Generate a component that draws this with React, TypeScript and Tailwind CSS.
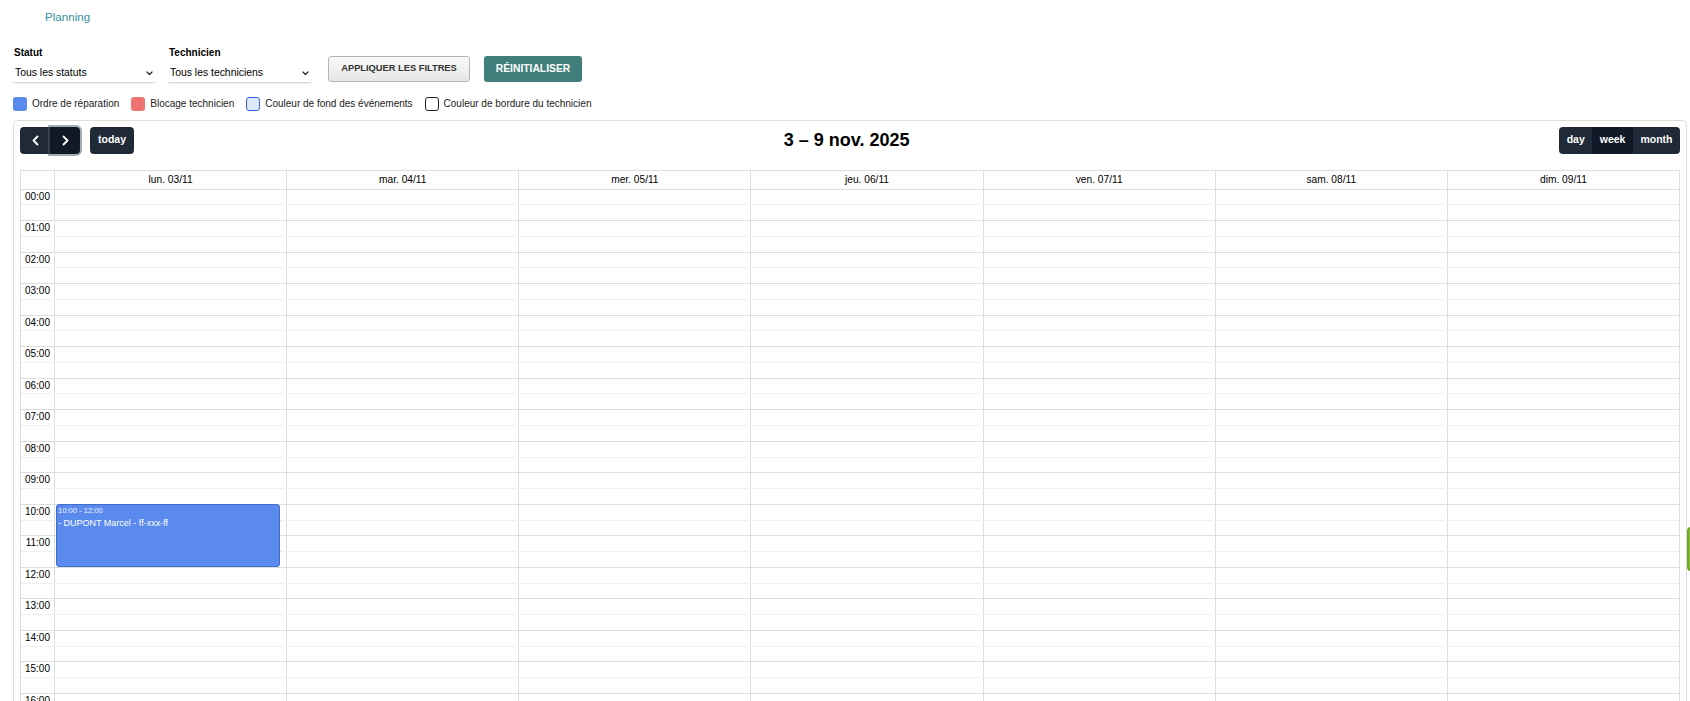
import * as React from 'react'

const DAYS = ['lun. 03/11', 'mar. 04/11', 'mer. 05/11', 'jeu. 06/11', 'ven. 07/11', 'sam. 08/11', 'dim. 09/11']
const HOURS = Array.from({ length: 24 }, (_, i) => i)

const LEGEND = [
  { label: 'Ordre de réparation', swatch: 'bg-[#5b8aee]' },
  { label: 'Blocage technicien', swatch: 'bg-[#f07474]' },
  { label: 'Couleur de fond des événements', swatch: 'bg-[#dbe7fd] border border-[#3565d4]' },
  { label: 'Couleur de bordure du technicien', swatch: 'bg-white border border-[#222]' },
]

function pad(n: number) {
  return String(n).padStart(2, '0')
}

function Chevron({ dir }: { dir: 'left' | 'right' | 'down' }) {
  if (dir === 'down') {
    return (
      <svg width="7" height="5" viewBox="0 0 7 5" fill="none">
        <path d="M1 1l2.5 2.5L6 1" stroke="#222" strokeWidth="1.2" strokeLinecap="round" strokeLinejoin="round" />
      </svg>
    )
  }
  return (
    <svg width="7" height="11" viewBox="0 0 7 11" fill="none">
      <path
        d={dir === 'left' ? 'M5.5 1.5 1.5 5.5l4 4' : 'M1.5 1.5l4 4-4 4'}
        stroke="white"
        strokeWidth="1.8"
        strokeLinecap="round"
        strokeLinejoin="round"
      />
    </svg>
  )
}

function FilterSelect({ label, value, width, className = '' }: { label: string; value: string; width: string; className?: string }) {
  return (
    <div className={`flex flex-col ${width} ${className}`}>
      <label className="h-[12px] pl-[2px] text-[10px] font-bold leading-[12px] text-black">{label}</label>
      <div
        role="combobox"
        className="relative mt-[4px] flex h-[20px] items-center rounded-[3px] border-b border-[#d6d6d6] pl-[3px] pr-[14px] pt-[1px] shadow-[0_1px_1px_rgba(0,0,0,0.05)]"
      >
        <span className="text-[10.4px] leading-[14px] text-black">{value}</span>
        <span className="pointer-events-none absolute right-[3px] top-[8px]">
          <Chevron dir="down" />
        </span>
      </div>
    </div>
  )
}

function Toolbar() {
  return (
    <div className="mb-[16px] flex h-[27px] items-center justify-between">
      <div className="flex items-center">
        <div className="flex">
          <button className="flex h-[27px] w-[30px] items-center justify-center rounded-l-[4px] bg-[#1f2937]">
            <Chevron dir="left" />
          </button>
          <button className="relative z-10 flex h-[27px] w-[30px] items-center justify-center rounded-r-[4px] bg-[#111827] shadow-[0_0_0_2px_rgba(76,91,106,0.5)]">
            <Chevron dir="right" />
          </button>
        </div>
        <button className="ml-[10px] h-[27px] w-[44px] rounded-[4px] bg-[#1f2937] text-[10.5px] font-bold text-white">
          today
        </button>
      </div>
      <h2 className="text-[18px] font-bold leading-[22px] text-black">3 – 9 nov. 2025</h2>
      <div className="flex h-[27px] overflow-hidden rounded-[4px] text-[10.5px] font-bold text-white">
        <button className="bg-[#1f2937] px-[7.5px]">day</button>
        <button className="bg-[#111827] px-[7.5px]">week</button>
        <button className="bg-[#1f2937] px-[7.5px]">month</button>
      </div>
    </div>
  )
}

function WeekGrid() {
  return (
    <div className="border-l border-r border-t border-[#ddd]">
      <div className="grid h-[18px] grid-cols-[33px_repeat(7,minmax(0,1fr))]">
        <div />
        {DAYS.map((d) => (
          <div key={d} className="border-l border-[#ddd] text-center text-[10.2px] leading-[18px] text-black">
            {d}
          </div>
        ))}
      </div>
      <div className="relative">
        {HOURS.map((h) => (
          <React.Fragment key={h}>
            <div className="grid h-[15.78px] grid-cols-[33px_repeat(7,minmax(0,1fr))] border-t border-[#ddd]">
              <div className="pr-[4px] text-right text-[10px] leading-[14px] text-black">{pad(h)}:00</div>
              {DAYS.map((d) => (
                <div key={d} className="border-l border-[#ddd]" />
              ))}
            </div>
            <div className="grid h-[15.78px] grid-cols-[33px_repeat(7,minmax(0,1fr))] border-t border-dotted border-[#e2e2e2]">
              <div />
              {DAYS.map((d) => (
                <div key={d} className="border-l border-[#ddd]" />
              ))}
            </div>
          </React.Fragment>
        ))}

        {/* lun. 03/11, 10:00 - 12:00 */}
        <div className="absolute left-[35px] top-[315.6px] h-[62.6px] w-[calc((100%-33px)/7-8px)] overflow-hidden rounded-[3px] border border-[#3f6fcb] bg-[#5b8aee] px-[1px] text-white">
          <div className="pt-[1px] text-[7.6px] leading-[10px] text-[#eef3ff]">10:00 - 12:00</div>
          <div className="text-[9px] leading-[14px]">- DUPONT Marcel - ff-xxx-ff</div>
        </div>
      </div>
    </div>
  )
}

export default function App() {
  return (
    <div className="relative h-[701px] overflow-hidden bg-white font-['Liberation_Sans',Arial,sans-serif]">
      <div className="h-[25px] pl-[45px] pt-[9px] text-[11.6px] leading-[16px] text-[#35939c]">Planning</div>

      <div className="mt-[22px] flex items-start pl-[12px]">
        <FilterSelect label="Statut" value="Tous les statuts" width="w-[144px]" />
        <FilterSelect label="Technicien" value="Tous les techniciens" width="w-[145px]" className="ml-[11px]" />
        <button className="ml-[16px] mt-[9px] h-[26px] w-[142px] rounded-[3px] border border-[#b4b4b4] bg-gradient-to-b from-[#fafafa] to-[#e6e6e6] text-[9.3px] font-bold text-[#333]">
          APPLIQUER LES FILTRES
        </button>
        <button className="ml-[14px] mt-[9px] h-[26px] w-[98px] rounded-[3px] bg-[#3f7e7b] pb-[1px] text-[10.3px] font-bold text-white">
          RÉINITIALISER
        </button>
      </div>

      <div className="mt-[13px] flex h-[15px] items-center gap-[12px] pl-[13px]">
        {LEGEND.map((item) => (
          <div key={item.label} className="flex items-center gap-[5px]">
            <span className={`h-[14px] w-[14px] rounded-[3px] ${item.swatch}`} />
            <span className="text-[10px] text-[#222]">{item.label}</span>
          </div>
        ))}
      </div>

      <div className="ml-[13px] mr-[3px] mt-[8.5px] rounded-[5px] border border-[#ddd] px-[6px] pt-[6px]">
        <Toolbar />
        <WeekGrid />
      </div>

      {/* feedback tab sticking out of the right edge */}
      <div className="absolute left-[1687px] top-[527px] h-[44px] w-[14px] rounded-[4px] border-2 border-[#6fa32a] bg-[#8cc63f]" />
    </div>
  )
}
